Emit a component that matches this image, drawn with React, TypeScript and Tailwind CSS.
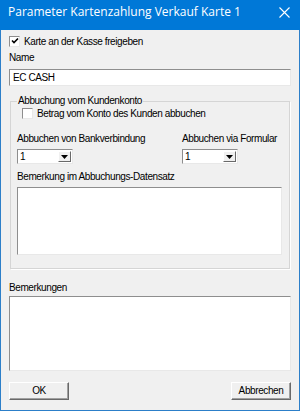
import { useState } from 'react'

const sunken = 'bg-white border border-t-[#8e8e8e] border-l-[#8e8e8e] border-b-[#e8e8e8] border-r-[#e8e8e8]';

function Check({ checked, onToggle }: { checked: boolean; onToggle: () => void }) {
  return (
    <span
      onClick={onToggle}
      className={`w-[11px] h-[11px] shrink-0 flex items-center justify-center cursor-pointer ${sunken}`}
    >
      {checked && (
        <svg width="8" height="8" viewBox="0 0 8 8">
          <path d="M1 3.5 L3 5.5 L7 1.5" fill="none" stroke="#000" strokeWidth="1.6" />
        </svg>
      )}
    </span>
  );
}

function Combo({ value }: { value: string }) {
  return (
    <div className={`w-[56px] h-[15px] flex items-center justify-between pl-[2px] ${sunken}`}>
      <span>{value}</span>
      <span className="w-[13px] h-[11px] mr-[1px] bg-[#f0f0f0] border border-t-white border-l-white border-b-[#696969] border-r-[#696969] flex items-center justify-center">
        <svg width="7" height="4" viewBox="0 0 7 4">
          <path d="M0 0 H7 L3.5 4 Z" fill="#000" />
        </svg>
      </span>
    </div>
  );
}

function Button({ label }: { label: string }) {
  return (
    <button className="w-[60px] h-[18px] bg-[#f0f0f0] border border-t-white border-l-white border-b-[#696969] border-r-[#696969] shadow-[inset_-1px_-1px_0_#a0a0a0] text-[10px] tracking-[-0.4px] text-black leading-none">
      {label}
    </button>
  );
}

export default function App() {
  const [karte, setKarte] = useState(true);
  const [betrag, setBetrag] = useState(false);

  return (
    <div className="w-[300px] h-[411px] flex flex-col text-[10px] tracking-[-0.4px] text-black whitespace-nowrap" style={{ fontFamily: '"Liberation Sans", Arial, sans-serif' }}>
      <div className="h-[30px] bg-[#0078d7] flex items-center justify-between pl-[8px] pr-[8px] text-white shrink-0">
        <span className="text-[12px] tracking-normal -mt-[6px]" style={{ fontFamily: '"Open Sans", "Liberation Sans", sans-serif' }}>Parameter Kartenzahlung Verkauf Karte 1</span>
        <svg width="11" height="11" viewBox="0 0 11 11" className="-mt-[6px] mr-[2px]">
          <path d="M0.5 0.5 L10.5 10.5 M10.5 0.5 L0.5 10.5" stroke="#fff" strokeWidth="1.1" />
        </svg>
      </div>
      <div className="flex-1 bg-[#f0f0f0] border-x border-b border-[#2c7fc9] px-[8px] flex flex-col">
        <div className="flex items-center gap-[4px] mt-[5px] h-[12px]">
          <Check checked={karte} onToggle={() => setKarte(!karte)} />
          <span>Karte an der Kasse freigeben</span>
        </div>
        <div className="mt-[5px] h-[12px] leading-[12px]">Name</div>
        <div className={`mt-[5px] h-[17px] flex items-center pl-[3px] ${sunken}`}>EC CASH</div>

        <fieldset className="mt-[9px] mx-[1px] border border-[#d5d5d5] shadow-[1px_1px_0_#fff] pl-[6px] pr-[7px] h-[174px]">
          <legend className="px-[1px] leading-[12px]">Abbuchung vom Kundenkonto</legend>
          <div className="flex items-center gap-[4px] mt-[0px] ml-[5px] h-[12px]">
            <Check checked={betrag} onToggle={() => setBetrag(!betrag)} />
            <span>Betrag vom Konto des Kunden abbuchen</span>
          </div>
          <div className="flex mt-[14px]">
            <div className="w-[165px]">
              <div className="h-[12px] leading-[12px]">Abbuchen von Bankverbindung</div>
              <div className="mt-[4px]"><Combo value="1" /></div>
            </div>
            <div>
              <div className="h-[12px] leading-[12px]">Abbuchen via Formular</div>
              <div className="mt-[4px]"><Combo value="1" /></div>
            </div>
          </div>
          <div className="mt-[7px] h-[12px] leading-[12px]">Bemerkung im Abbuchungs-Datensatz</div>
          <div className={`mt-[4px] h-[68px] ${sunken}`} />
        </fieldset>

        <div className="mt-[13px] h-[12px] leading-[12px]">Bemerkungen</div>
        <div className={`mt-[2px] h-[75px] ${sunken}`} />

        <div className="flex justify-between mt-[11px]">
          <Button label="OK" />
          <Button label="Abbrechen" />
        </div>
      </div>
    </div>
  );
}
